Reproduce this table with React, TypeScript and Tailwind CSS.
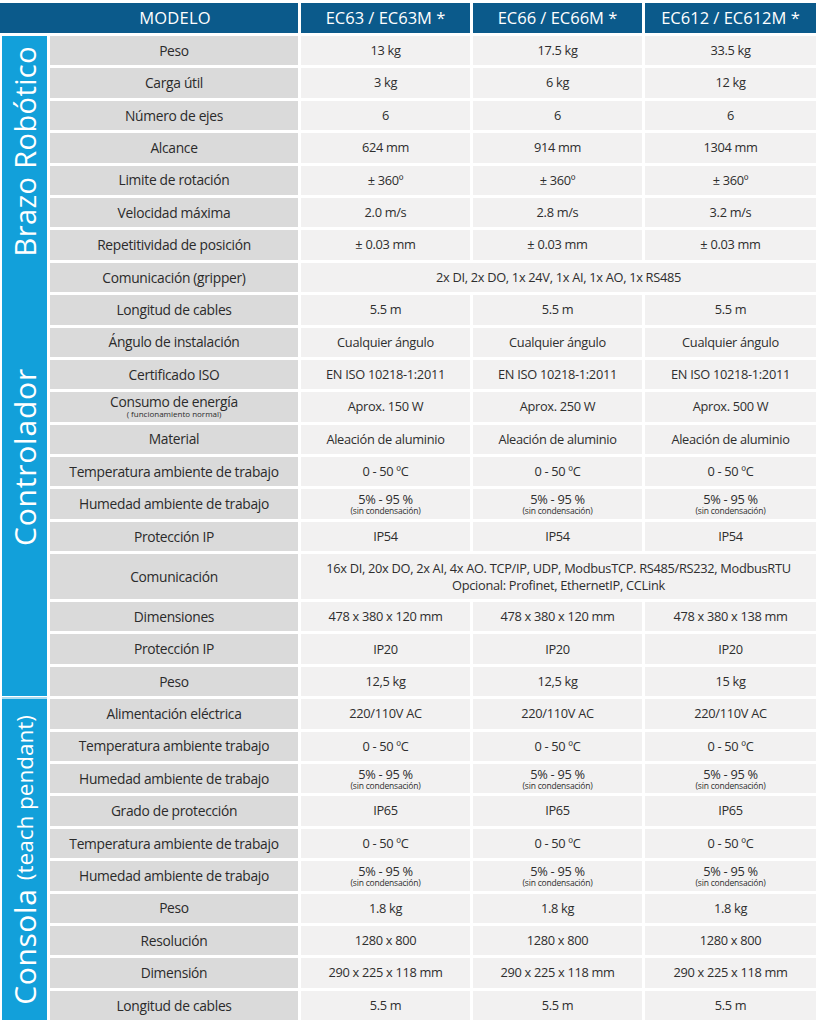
type Cell = string | { main: string; sub: string }

type Row = {
  label: string
  labelSub?: string
  values?: Cell[]
  span?: string[]
}

const cond = (v: string): Cell => ({ main: v, sub: '(sin condensación)' })

const brazo: Row[] = [
  { label: 'Peso', values: ['13 kg', '17.5 kg', '33.5 kg'] },
  { label: 'Carga útil', values: ['3 kg', '6 kg', '12 kg'] },
  { label: 'Número de ejes', values: ['6', '6', '6'] },
  { label: 'Alcance', values: ['624 mm', '914 mm', '1304 mm'] },
  { label: 'Limite de rotación', values: ['± 360º', '± 360º', '± 360º'] },
  { label: 'Velocidad máxima', values: ['2.0 m/s', '2.8 m/s', '3.2 m/s'] },
  { label: 'Repetitividad de posición', values: ['± 0.03 mm', '± 0.03 mm', '± 0.03 mm'] },
]

const controlador: Row[] = [
  { label: 'Comunicación (gripper)', span: ['2x DI, 2x DO, 1x 24V, 1x AI, 1x AO, 1x RS485'] },
  { label: 'Longitud de cables', values: ['5.5 m', '5.5 m', '5.5 m'] },
  { label: 'Ángulo de instalación', values: ['Cualquier ángulo', 'Cualquier ángulo', 'Cualquier ángulo'] },
  { label: 'Certificado ISO', values: ['EN ISO 10218-1:2011', 'EN ISO 10218-1:2011', 'EN ISO 10218-1:2011'] },
  {
    label: 'Consumo de energía',
    labelSub: '( funcionamiento normal)',
    values: ['Aprox. 150 W', 'Aprox. 250 W', 'Aprox. 500 W'],
  },
  { label: 'Material', values: ['Aleación de aluminio', 'Aleación de aluminio', 'Aleación de aluminio'] },
  { label: 'Temperatura ambiente de trabajo', values: ['0 - 50 ºC', '0 - 50 ºC', '0 - 50 ºC'] },
  { label: 'Humedad  ambiente de trabajo', values: [cond('5% - 95 %'), cond('5% - 95 %'), cond('5% - 95 %')] },
  { label: 'Protección IP', values: ['IP54', 'IP54', 'IP54'] },
  {
    label: 'Comunicación',
    span: [
      '16x DI, 20x DO, 2x AI, 4x AO. TCP/IP, UDP, ModbusTCP. RS485/RS232, ModbusRTU',
      'Opcional: Profinet, EthernetIP, CCLink',
    ],
  },
  { label: 'Dimensiones', values: ['478 x 380 x 120 mm', '478 x 380 x 120 mm', '478 x 380 x 138 mm'] },
  { label: 'Protección IP', values: ['IP20', 'IP20', 'IP20'] },
  { label: 'Peso', values: ['12,5 kg', '12,5 kg', '15 kg'] },
]

const consola: Row[] = [
  { label: 'Alimentación eléctrica', values: ['220/110V AC', '220/110V AC', '220/110V AC'] },
  { label: 'Temperatura ambiente trabajo', values: ['0 - 50 ºC', '0 - 50 ºC', '0 - 50 ºC'] },
  { label: 'Humedad ambiente de trabajo', values: [cond('5% - 95 %'), cond('5% - 95 %'), cond('5% - 95 %')] },
  { label: 'Grado de protección', values: ['IP65', 'IP65', 'IP65'] },
  { label: 'Temperatura ambiente de trabajo', values: ['0 - 50 ºC', '0 - 50 ºC', '0 - 50 ºC'] },
  { label: 'Humedad ambiente de trabajo', values: [cond('5% - 95 %'), cond('5% - 95 %'), cond('5% - 95 %')] },
  { label: 'Peso', values: ['1.8 kg', '1.8 kg', '1.8 kg'] },
  { label: 'Resolución', values: ['1280 x 800', '1280 x 800', '1280 x 800'] },
  { label: 'Dimensión', values: ['290 x 225 x 118 mm', '290 x 225 x 118 mm', '290 x 225 x 118 mm'] },
  { label: 'Longitud de cables', values: ['5.5 m', '5.5 m', '5.5 m'] },
]

const font = { fontFamily: '"Open Sans", "Liberation Sans", sans-serif' }

function ValueCell({ cell }: { cell: Cell }) {
  if (typeof cell === 'string') {
    return (
      <div className="bg-[#f2f1f1] flex items-center justify-center text-[12.8px] text-[#2e2e2e] tracking-[-0.3px]">
        {cell}
      </div>
    )
  }
  return (
    <div className="bg-[#f2f1f1] flex flex-col items-center justify-center text-[#2e2e2e]">
      <span className="text-[12.8px] leading-[14px] tracking-[-0.3px]">{cell.main}</span>
      <span className="text-[8.5px] leading-[10px] tracking-[-0.2px]">{cell.sub}</span>
    </div>
  )
}

function TableRow({ row }: { row: Row }) {
  return (
    <>
      <div className="bg-[#dadada] flex flex-col items-center justify-center text-[13.8px] text-[#2b2b2b] tracking-[-0.3px]">
        <span className={row.labelSub ? 'leading-[15px]' : 'leading-none'}>{row.label}</span>
        {row.labelSub && <span className="text-[8px] leading-[10px] tracking-normal">{row.labelSub}</span>}
      </div>
      {row.span ? (
        <div className="col-span-3 bg-[#f2f1f1] flex flex-col items-center justify-center text-[12.8px] text-[#2e2e2e] tracking-[-0.3px] leading-[17px]">
          {row.span.map(line => (
            <span key={line}>{line}</span>
          ))}
        </div>
      ) : (
        row.values!.map((v, i) => <ValueCell key={i} cell={v} />)
      )}
    </>
  )
}

export default function App() {
  return (
    <div className="w-[819px] h-[1024px] bg-white pt-[3px] overflow-hidden" style={font}>
      {/* header */}
      <div className="grid grid-cols-[298px_169px_169px_171px] gap-[3px] h-[30px] text-white text-[16.5px]">
        <div className="bg-[#0b5a8b] flex items-center justify-center pl-[52px] tracking-[0.2px]">MODELO</div>
        <div className="bg-[#0b5a8b] flex items-center justify-center">EC63 / EC63M *</div>
        <div className="bg-[#0b5a8b] flex items-center justify-center">EC66 / EC66M *</div>
        <div className="bg-[#0b5a8b] flex items-center justify-center">EC612 / EC612M *</div>
      </div>

      {/* body */}
      <div className="mt-[3px] pl-[2px] grid grid-cols-[45px_248px_169px_169px_171px] grid-rows-[repeat(16,29.4px)_44.8px_repeat(13,29.4px)] gap-[3px]">
        <div className="row-start-1 row-span-7 col-start-1 bg-[#12a0da] -mb-[3px] flex items-center justify-center pt-[4px]">
          <span className="[writing-mode:vertical-rl] rotate-180 text-white text-[29px] leading-none tracking-[0.4px]">
            Brazo Robótico
          </span>
        </div>
        <div className="row-start-8 row-span-13 col-start-1 bg-[#12a0da] flex items-center justify-center pb-[44px]">
          <span className="[writing-mode:vertical-rl] rotate-180 text-white text-[30px] leading-none tracking-[0.8px]">
            Controlador
          </span>
        </div>
        <div className="row-start-21 row-span-10 col-start-1 bg-[#12a0da] flex items-center justify-center shadow-[0_-2px_0_0_#a9dcf1]">
          <span className="[writing-mode:vertical-rl] rotate-180 text-white leading-none whitespace-nowrap">
            <span className="text-[30px] tracking-[0.6px]">Consola </span>
            <span className="text-[22.5px]">(teach pendant)</span>
          </span>
        </div>

        {[...brazo, ...controlador, ...consola].map((row, i) => (
          <div key={i} className="contents [&>*:first-child]:col-start-2">
            <TableRow row={row} />
          </div>
        ))}
      </div>
    </div>
  )
}
